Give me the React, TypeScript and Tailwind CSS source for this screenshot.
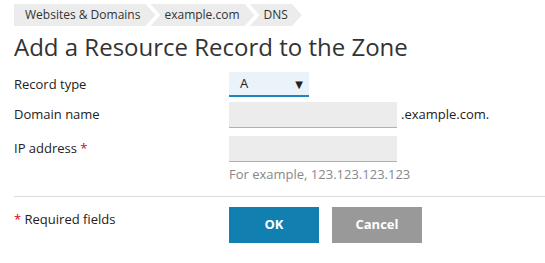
import React from "react";

const crumbFirst =
  "[clip-path:polygon(0_0,calc(100%-10px)_0,100%_50%,calc(100%-10px)_100%,0_100%)]";
const crumbNext =
  "[clip-path:polygon(0_0,calc(100%-10px)_0,100%_50%,calc(100%-10px)_100%,0_100%,10px_50%)]";

export default function App() {
  return (
    <div
      className="w-[545px] h-[263px] bg-white overflow-hidden text-[#222]"
      style={{ fontFamily: '"Open Sans", "DejaVu Sans", sans-serif' }}
    >
      <div className="pl-[14px] pt-[4px]">
        {/* Breadcrumb */}
        <div className="flex h-[22px] text-[12px] text-[#333]">
          <div className={`flex items-center bg-[#ececec] pl-[11px] pr-[15px] ${crumbFirst}`}>
            Websites &amp; Domains
          </div>
          <div className={`flex items-center bg-[#ececec] ml-[-5px] pl-[14px] pr-[15px] ${crumbNext}`}>
            example.com
          </div>
          <div className={`flex items-center bg-[#ececec] ml-[-5px] pl-[14px] pr-[14px] ${crumbNext}`}>
            DNS
          </div>
        </div>

        {/* Title */}
        <h1 className="mt-[5px] text-[24px] leading-[32px] text-[#333] font-normal">
          Add a Resource Record to the Zone
        </h1>

        {/* Form */}
        <div className="mt-[9px] flex flex-col text-[13px]">
          <div className="flex items-center h-[25px]">
            <div className="w-[215px]">Record type</div>
            <div className="w-[80px] h-[25px] bg-[#eaf3fa] border-b-2 border-[#1b86bf] flex items-center justify-between pl-[11px] pr-[6px]">
              <span>A</span>
              <span className="text-[10px] leading-none">▼</span>
            </div>
          </div>
          <div className="flex items-center h-[26px] mt-[5px]">
            <div className="w-[215px]">Domain name</div>
            <div className="w-[168px] h-[26px] bg-[#ececec] border-b border-[#aab2ba]" />
            <div className="ml-[4px]">.example.com.</div>
          </div>
          <div className="flex items-center h-[26px] mt-[8px]">
            <div className="w-[215px]">
              IP address <span className="text-[#d0021b]">*</span>
            </div>
            <div className="w-[168px] h-[26px] bg-[#ececec] border-b border-[#aab2ba]" />
          </div>
          <div className="flex mt-[3px] h-[20px] items-center">
            <div className="w-[215px]" />
            <div className="text-[#888]">For example, 123.123.123.123</div>
          </div>
        </div>

        <div className="mt-[11px] h-px bg-[#dcdcdc]" />

        <div className="flex mt-[10px]">
          <div className="w-[215px] text-[13px] pt-[3px]">
            <span className="text-[#d0021b]">*</span> Required fields
          </div>
          <div className="flex gap-[13px]">
            <button className="w-[90px] h-[36px] bg-[#117fb0] text-white text-[13px] font-bold">
              OK
            </button>
            <button className="w-[90px] h-[36px] bg-[#999999] text-white text-[13px] font-bold">
              Cancel
            </button>
          </div>
        </div>
      </div>
    </div>
  );
}
